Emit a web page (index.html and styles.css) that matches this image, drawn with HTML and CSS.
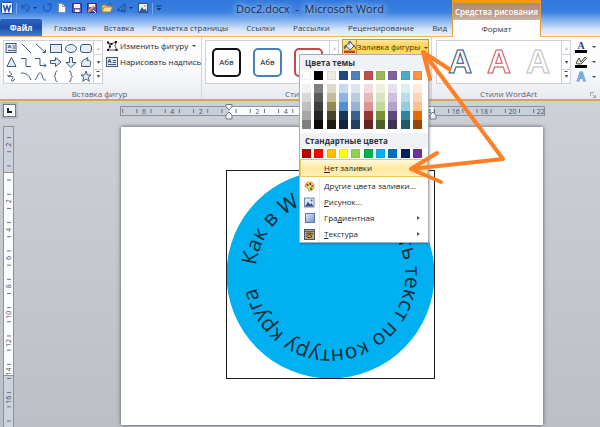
FILE: index.html
```html
<!DOCTYPE html>
<html lang="ru">
<head>
<meta charset="utf-8">
<title>Doc2.docx - Microsoft Word</title>
<link rel="stylesheet" href="styles.css">
</head>
<body>
<div class="app">
  <header class="top">
    <div class="titlebar">
      <div class="quick">
        <svg class="word-logo" viewBox="0 0 12 12" width="12" height="12"><rect x=".5" y=".5" width="11" height="11" rx="1" fill="#f4f8fe" stroke="#1d4f9e"/><path d="M2.5 3l1.600 6L6 4l1.900 5 1.600-6" fill="none" stroke="#1d55b0" stroke-width="1.500"/></svg>
        <i class="bar"></i>
        <button aria-label="Отменить"><svg viewBox="0 0 18 12" width="18" height="12"><path d="M2 2v4h4M2.500 5.500C4 2.500 9 2 9 5.500 9 8 7 9 6 9.500" fill="none" stroke="#2a5fb8" stroke-width="1.600"/><path d="M13 5h4l-2 2z" fill="#17386e"/></svg></button>
        <button aria-label="Повторить"><svg viewBox="0 0 12 12" width="12" height="12"><path d="M8.500 3A3.500 3.500 0 1 1 3.500 3M6 2h4v4" fill="none" stroke="#1f5cc4" stroke-width="1.400"/></svg></button>
        <button aria-label="Создать"><svg viewBox="0 0 12 12" width="12" height="12"><path d="M2.500 1.500h4l3 3v6h-7z" fill="#fff" stroke="#7c93b8"/><path d="M6.500 1.500v3h3" fill="none" stroke="#7c93b8"/></svg></button>
        <button aria-label="Сохранить"><svg viewBox="0 0 12 12" width="12" height="12"><path d="M1.500 1.500h9v9h-9z" fill="#6558b8" stroke="#362c88"/><path d="M3 2h6v4H3z" fill="#f3f3fb"/><path d="M4 7.500h4.500V10H4z" fill="#fff"/></svg></button>
        <button aria-label="Сохранить как"><svg viewBox="0 0 12 12" width="12" height="12"><path d="M1.500 1.500h9v9h-9z" fill="#6558b8" stroke="#362c88"/><path d="M3 2h6v3H3z" fill="#fff"/><path d="M2 10l6-6" stroke="#ef9a36" stroke-width="2"/><path d="M7 8l3 3" stroke="#fff"/></svg></button>
        <button aria-label="Открыть"><svg viewBox="0 0 12 12" width="12" height="12"><path d="M1 10V3h4l1 1h4v2" fill="#f5cf62" stroke="#a3731d" stroke-width=".8"/><path d="M1 10l2-5h8.500L9.500 10z" fill="#ffe08a" stroke="#a3731d" stroke-width=".8"/><path d="M7 2c2-1 3 0 3.500 1.500" fill="none" stroke="#2656a8"/></svg></button>
        <button aria-label="Фигура"><svg viewBox="0 0 18 12" width="18" height="12"><path d="M1 8l8-6v8z" fill="#3c78d4" stroke="#173f88" stroke-width=".8"/><path d="M5 7l2 3.500V7z" fill="#1d4f9e"/><path d="M13 5h4l-2 2z" fill="#17386e"/></svg></button>
        <button aria-label="Рисунок"><svg viewBox="0 0 12 12" width="12" height="12"><rect x="1.500" y="1.500" width="9" height="9" fill="#e8eefa" stroke="#324f86"/><path d="M2 10l3-5 2 3 1.500-1.500L10 10z" fill="#3e568f"/><circle cx="8" cy="4" r="1" fill="#e8a23a"/></svg></button>
        <i class="bar"></i>
        <button aria-label="Настройка панели"><svg viewBox="0 0 6 12" width="6" height="12"><path d="M.5 4h5" stroke="#15356a"/><path d="M.5 6h5L3 8.500z" fill="#15356a"/></svg></button>
      </div>
      <h1 class="doc-title">Doc2.docx&nbsp; -&nbsp; Microsoft Word</h1>
    </div>
    <nav class="tabs">
      <button class="tab file">Файл</button>
      <button class="tab">Главная</button>
      <button class="tab">Вставка</button>
      <button class="tab">Разметка страницы</button>
      <button class="tab">Ссылки</button>
      <button class="tab">Рассылки</button>
      <button class="tab">Рецензирование</button>
      <button class="tab">Вид</button>
    </nav>
    <div class="context">
      <div class="context-name">Средства рисования</div>
      <button class="context-tab">Формат</button>
    </div>
  </header>

  <section class="ribbon">
    <div class="group insert">
      <div class="group-body">
        <div class="gallery">
          <div class="shapes">
            <svg viewBox="0 0 14 14"><rect x="2" y="2.500" width="10" height="9" fill="#dfe9f6" stroke="#40587c"/><path d="M4 7l1.500-3L7 7M4.500 6h2M8.500 5H11M8.500 7H11M4 9.500h7" stroke="#2d4468" fill="none" stroke-width=".8"/></svg>
            <svg viewBox="0 0 14 14"><path d="M3 3l9 9"/></svg>
            <svg viewBox="0 0 14 14"><path d="M2 3l9 8M11.500 8.500v3h-3"/></svg>
            <svg viewBox="0 0 14 14"><rect class="f" x="1.500" y="3.500" width="11" height="8"/></svg>
            <svg viewBox="0 0 14 14"><ellipse class="f" cx="7" cy="7.500" rx="5.500" ry="4"/></svg>
            <svg viewBox="0 0 14 14"><rect class="f" x="1.500" y="3.500" width="11" height="8" rx="2.500"/></svg>
            <svg viewBox="0 0 14 14"><path class="f" d="M7.500 2.500l4.500 9H3z"/></svg>
            <svg viewBox="0 0 14 14"><path d="M2 3.500h5v8h5"/></svg>
            <svg viewBox="0 0 14 14"><path d="M1 3.500h5v7h6M10 8.500l2 2-2 2"/></svg>
            <svg viewBox="0 0 14 14"><path class="f" d="M1.500 5.500h5v-3l5.500 4.500-5.500 4.500v-3h-5z"/></svg>
            <svg viewBox="0 0 14 14"><path class="f" d="M5.500 2.500h3v5H12l-5 5-5-5h3.500z"/></svg>
            <svg viewBox="0 0 14 14"><path class="f" d="M4 5.500l5-3-1 3c4-1 4 1 3 6H2.500c0-3 0-4 1.500-6z"/></svg>
            <svg viewBox="0 0 14 14"><path d="M6 2c-3 2 4 2 1 4s-4-1-3 1 5-1 5 1-3 3-1 4 2-3 3-2"/></svg>
            <svg viewBox="0 0 14 14"><path d="M2 4c5 0 8 2 10 7"/></svg>
            <svg viewBox="0 0 14 14"><path d="M1 11C4 8 4 3 6.500 4S8 12 12 11"/></svg>
            <svg viewBox="0 0 14 14"><path d="M8.500 2C5 2 8 6 5 7.500c3 1 0 5 3.500 5"/></svg>
            <svg viewBox="0 0 14 14"><path d="M5 2c3.500 0 .5 4 3.500 5.500-3 1 0 5-3.500 5"/></svg>
            <svg viewBox="0 0 14 14"><path class="f" d="M7 2l1.500 4H12L9.300 8.300l1 4L7 10l-3.300 2.300 1-4L2 6h3.500z"/></svg>
          </div>
          <div class="scroller"><button class="off" aria-label="Вверх">▴</button><button aria-label="Вниз">▾</button><button class="more" aria-label="Ещё">▾</button></div>
        </div>
        <div class="commands">
          <button class="cmd"><svg viewBox="0 0 12 12" width="12" height="12"><path d="M2 2.500l3 1.500 5-2-1 4 2 4H2.500L4 6z" fill="#fff" stroke="#222" stroke-width=".8"/><path d="M1 1.500h2v2H1zM9 1h2v2H9zM1 9h2v2H1zM9.500 9h2v2h-2zM4.500 3h2v2h-2zM3 5.500h2v2H3z" fill="#111"/></svg>Изменить фигуру <span class="caret"></span></button>
          <button class="cmd"><svg viewBox="0 0 12 12" width="12" height="12"><rect x=".5" y="1.500" width="11" height="9" fill="#dfe9f6" stroke="#40587c"/><path d="M2 7l1.500-4L5 7M2.500 5.500h2M7 4.500h3M7 6.500h3M2 8.500h8" stroke="#2d4468" fill="none" stroke-width=".9"/></svg>Нарисовать надпись</button>
        </div>
      </div>
      <div class="group-name">Вставка фигур</div>
    </div>

    <div class="group styles">
      <div class="group-body">
        <div class="gallery">
          <div class="presets">
            <button class="preset black">Абв</button>
            <button class="preset blue">Абв</button>
            <button class="preset red">Абв</button>
          </div>
          <div class="scroller"><button class="off" aria-label="Вверх">▴</button><button aria-label="Вниз">▾</button><button class="more" aria-label="Ещё">▾</button></div>
        </div>
        <div class="fill-wrap">
          <button class="fill-btn"><span class="fill-icon"><svg viewBox="0 0 13 13" width="13" height="13"><path d="M3 5.500l4-3.500 4 4-4 4z" fill="#eef2f9" stroke="#465a7c"/><path d="M6 5V1.500c1.500-1 2 0 2 1.500" fill="none" stroke="#465a7c" stroke-width=".9"/><path d="M3 5c-2 1-2 2.500-1.500 4C2.500 8 3 7 3.500 6zM11 5c1.500 1 1.500 2.500 1.500 4" fill="#2f66b8" stroke="#2f66b8" stroke-width=".8"/><path d="M1 10.500h11v2.500H1z" fill="#c5402c"/></svg></span><span class="fill-text">Заливка фигуры <i class="caret"></i></span></button>
          <div class="menu">
            <div class="menu-head">Цвета темы</div>
            <div class="swatches" data-set="theme"></div>
            <div class="shades"></div>
            <div class="menu-head second">Стандартные цвета</div>
            <div class="swatches" data-set="standard"></div>
            <button class="item hot"><span class="ico"></span><span><u>Н</u>ет заливки</span></button>
            <button class="item"><span class="ico"><svg viewBox="0 0 11 11" width="11" height="11"><path d="M5.500 1C9 1 10.500 3.500 10 6c-.5 3-3 4.500-5 4-1.500-.5 0-2-1-3S1 7 1 5s2-4 4.500-4z" fill="#f7dd6c" stroke="#b98a22" stroke-width=".8"/><circle cx="3.500" cy="4" r="1.200" fill="#d22"/><circle cx="6.300" cy="3" r="1" fill="#222"/><circle cx="8.200" cy="5" r="1" fill="#d22"/><circle cx="7" cy="7.800" r="1.200" fill="#1b8a3a"/></svg></span><span>Др<u>у</u>гие цвета заливки...</span></button>
            <button class="item"><span class="ico"><svg viewBox="0 0 11 11" width="11" height="11"><rect x=".5" y="1" width="9.500" height="9" fill="#dfe8f7" stroke="#7087b2"/><path d="M1 9.500l3-5 2 3 1.500-1.500 2 3.500z" fill="#38508c"/><circle cx="7.500" cy="3.500" r="1" fill="#3a61b0"/></svg></span><span><u>Р</u>исунок...</span></button>
            <button class="item"><span class="ico"><i class="grad"></i></span><span>Гра<u>д</u>иентная</span><b class="sub"></b></button>
            <button class="item"><span class="ico"><svg viewBox="0 0 11 11" width="11" height="11"><rect x=".5" y=".5" width="10" height="10" fill="#c9a468" stroke="#4a5570"/><path d="M1 2.500h9" stroke="#55627c"/><path d="M2 5c2-1.500 5-1 7 0M2.500 8c1-3 4.500-3 5-1s-2 1.500-4 1.500" fill="none" stroke="#3c2a14"/></svg></span><span><u>Т</u>екстура</span><b class="sub"></b></button>
          </div>
        </div>
      </div>
      <div class="group-name">Стили фигур</div>
    </div>

    <div class="group wordart">
      <div class="group-body">
        <div class="gallery">
          <div class="letters"><span class="wa navy">A</span><span class="wa rose">A</span><span class="wa gray">A</span></div>
          <div class="scroller"><button class="off" aria-label="Вверх">▴</button><button aria-label="Вниз">▾</button><button class="more" aria-label="Ещё">▾</button></div>
        </div>
        <div class="tools">
          <button class="tool"><span class="t-a">A</span><i class="caret"></i></button>
          <button class="tool"><svg viewBox="0 0 12 13" width="12" height="13"><path d="M1 8l3-5 2 4 4-5 1.500 1.500L6 9H3z" fill="#eadfca" stroke="#333" stroke-width=".9"/><path d="M0 10h12v3H0z" fill="#000"/></svg><i class="caret"></i></button>
          <button class="tool"><span class="t-glow">A</span><i class="caret"></i></button>
        </div>
      </div>
      <div class="group-name">Стили WordArt<svg class="launcher" viewBox="0 0 6 6" width="6" height="6"><path d="M.5 4V.5H4M2.500 2.500l3 3M5.500 3v2.500H3" fill="none" stroke="#8a93a0" stroke-width=".8"/></svg></div>
    </div>
  </section>

  <main class="work">
    <div class="ruler-row">
      <button class="tab-stop" aria-label="Табуляция"><svg viewBox="0 0 5 5" width="5" height="5"><path d="M1 0v4h4" fill="none" stroke="#222" stroke-width="2"/></svg></button>
      <svg class="hruler" height="16"></svg>
    </div>
    <div class="desk">
      <svg class="vruler" width="12"></svg>
      <div class="page">
        <svg class="figure" viewBox="0 0 209 209" width="209" height="209">
          <defs><path id="ring" d="M29.500 104.500a75 75 0 0 1 150 0a75 75 0 0 1-150 0"/></defs>
          <circle cx="104.500" cy="104.500" r="104" fill="#00b0f0"/>
          <rect x=".5" y=".5" width="208" height="208" fill="none" stroke="#1c1c1c"/>
          <text class="ring-text"><textPath href="#ring" startOffset="9">Как в Word написать текст по контуру круга</textPath></text>
        </svg>
      </div>
    </div>
  </main>
  <svg class="pointer" viewBox="0 0 110 150" width="110" height="150"><path d="M104 119L25 13M50 29L24 12l7 27M104 119L12 129M38 113L12 129l30 13"/></svg>
</div>
<script src="script.js"></script>
</body>
</html>
```
FILE: styles.css
```css
* { box-sizing: border-box; }
body { margin: 0; font: 8px/12px "Open Sans", "Noto Sans", sans-serif; color: #20242b; }
button { font: inherit; color: inherit; background: none; border: 0; padding: 0; margin: 0; }
svg { display: block; flex: none; }
.app { position: relative; display: flex; flex-direction: column; min-height: 100vh; overflow: hidden; }

.top { position: relative; background: linear-gradient(#3077dd 0, #3a80e0 12px, #7fb0ee 20px, #d9e6f8 30px, #e9f0fa 36px); }
.titlebar { position: relative; height: 19px; }
.quick { display: flex; align-items: center; gap: 3px; height: 16px; padding-left: 1px; }
.bar { width: 1px; height: 11px; background: #7aa7ea; }
.doc-title { position: absolute; left: 20px; right: 0; top: 1px; width: max-content; margin: 0 auto; padding: 0 10px; font: 400 11px/16px "Open Sans", sans-serif; color: #1f2c40; text-shadow: 0 0 6px #c8defa, 0 0 6px #c8defa; }
.tabs { display: flex; height: 17px; }
.tab { padding: 0 9px; color: #343d4a; white-space: nowrap; }
.tab.file { width: 42px; margin-right: 3px; padding: 0; color: #fff; font-weight: 700; background: linear-gradient(#2c62c4, #1f4fa8 50%, #3b7fe0); border-radius: 2px 2px 0 0; }
.context { position: absolute; top: 0; left: 452px; width: 89px; border: 1px solid #e2a23c; border-top: 3px solid #f79a10; border-bottom: 0; }
.context-name { height: 17px; line-height: 17px; text-align: center; font-weight: 600; color: #fff; background: linear-gradient(#b08a78, #b9978a 60%, #cdb4a8); white-space: nowrap; }
.context-tab { display: block; width: 100%; height: 17px; background: #fdfdfe; color: #343d4a; }

.ribbon { display: flex; height: 65px; border-top: 1px solid #ecb85e; border-bottom: 2px solid #d2a757; background: linear-gradient(#fff, #f7f8fa 60%, #e8eaee); }
.group { display: flex; flex-direction: column; border-right: 1px solid #ecd6a8; }
.group-body { display: flex; padding: 3px 2px 0 3px; }
.group-name { position: relative; margin-top: 4px; text-align: center; color: #5a616c; }
.insert { width: 202px; }
.insert .group-name { padding-right: 2px; }
.styles { width: 230px; }
.styles .group-name { padding-right: 14px; }
.wordart { flex: 1; border-right: 0; }
.wordart .group-name { padding-right: 15px; }
.gallery { display: flex; height: 44px; border: 1px solid #cdd2da; background: #fff; }
.shapes { display: grid; grid-template-columns: repeat(6, 14px); grid-auto-rows: 14px; column-gap: 1px; }
.shapes svg { width: 14px; height: 14px; fill: none; stroke: #3f5877; }
.shapes .f { fill: #e3eefa; }
.scroller { display: flex; flex-direction: column; width: 9px; border-left: 1px solid #cdd2da; }
.scroller button { flex: 1; font-size: 6px; line-height: 6px; border-bottom: 1px solid #cdd2da; color: #444; }
.scroller button:last-child { border-bottom: 0; }
.scroller .off { color: #c2c6cc; }
.more { text-decoration: overline; }
.commands { display: flex; flex-direction: column; gap: 4px; padding-left: 3px; }
.cmd { display: flex; align-items: center; gap: 2px; height: 12px; white-space: nowrap; }
.caret { display: inline-block; width: 0; height: 0; margin-left: 2px; border: 2px solid transparent; border-top: 2px solid #444; border-bottom: 0; vertical-align: middle; }
.presets { display: flex; align-items: center; gap: 12px; width: 123px; padding-left: 6px; overflow: hidden; }
.preset { flex: none; width: 29px; height: 29px; border: 2px solid #111; border-radius: 5px; color: #111; background: #fff; }
.preset.blue { border-color: #4a7ebb; }
.preset.red { border-color: #be4b48; }
.fill-wrap { position: relative; margin: -1px 0 0 3px; }
.fill-btn { display: flex; height: 16px; width: 87px; border: 1px solid #c29337; background: linear-gradient(#ffe79a, #ffd04e 50%, #ffe071); }
.fill-icon { width: 15px; border-right: 1px solid #c29337; }
.fill-text { flex: 1; line-height: 14px; white-space: nowrap; color: #463a1c; }

.menu { position: absolute; z-index: 2; top: 15px; right: 0; width: 130px; border: 1px solid #a9afb8; background: #fff; box-shadow: 1px 1px 2px #0004; }
.menu-head { height: 15px; padding-left: 5px; line-height: 15px; font-weight: 700; color: #2b3340; background: #f0f2f5; }
.swatches, .shades { display: grid; grid-template-columns: repeat(10, 9px); justify-content: space-between; padding: 1px 6px 0 2px; }
.swatches button { height: 9px; border: 1px solid #0001; }
.shades { padding-top: 4px; grid-auto-rows: 9px; }
.second { margin-top: 4px; }
.item { position: relative; display: flex; align-items: center; width: 100%; height: 16px; text-align: left; white-space: nowrap; }
.item.hot { height: 18px; margin: 1px 0; border: 1px solid #e9c65e; background: linear-gradient(#fff8dc, #ffe9a0 50%, #fff0b8); }
.ico { width: 20px; height: 100%; display: flex; align-items: center; justify-content: center; border-right: 1px solid #e8eaee; margin-right: 4px; }
.hot .ico { border-color: transparent; margin-right: 3px; }
.grad { width: 10px; height: 10px; border: 1px solid #5d79a8; background: linear-gradient(135deg, #dce8fa, #7196d2); }
.sub { margin: 0 8px 0 auto; border: 2px solid transparent; border-left: 3px solid #555; border-right: 0; }

.wordart .gallery { margin-left: 1px; }
.letters { display: flex; justify-content: center; gap: 15px; align-items: center; width: 124px; }
.wa { font: 700 33px/40px "Liberation Sans", sans-serif; color: #fff; -webkit-text-stroke: 1px #2f4f86; }
.wa.navy { color: #f8faed; }
.wa.rose { -webkit-text-stroke-color: #cf5560; }
.wa.gray { -webkit-text-stroke-color: #bdbdbd; }
.tools { display: flex; flex-direction: column; gap: 2px; padding-left: 4px; }
.tool { display: flex; align-items: center; gap: 3px; height: 13px; }
.t-a { width: 12px; height: 12px; border-bottom: 3px solid #000; font: 700 10px/9px "Liberation Serif", serif; color: #1f3f80; }
.t-glow { width: 12px; font: 700 12px/12px "Liberation Sans", sans-serif; color: #fff; -webkit-text-stroke: 1px #5c9bd8; }
.launcher { position: absolute; right: 4px; bottom: 2px; }

.work { flex: 1; display: flex; flex-direction: column; background: linear-gradient(#cdd1d7, #bcbfc5); }
.ruler-row { display: flex; height: 25px; }
.tab-stop { display: flex; align-items: center; justify-content: center; flex: none; width: 13px; height: 13px; margin: 3px 0 0 3px; border: 1px solid #707884; background: #fff; outline: 2px solid #b7bcc4; }
.hruler { flex: 1; margin: 3px 54px 0 104px; min-width: 0; }
.vruler { margin-left: 3px; height: auto; }
.desk { flex: 1; display: flex; }
.page { flex: 1; margin: 1px 57px 2px 106px; padding: 43px 3px 0 0; background: #fff; box-shadow: 0 0 4px #4d535c; }
.figure { margin: 0 auto; }
.ring-text { font: 21px "Open Sans", sans-serif; fill: #152a35; }
.ruler-text { font-size: 7px; fill: #4a515c; text-anchor: middle; }
.pointer { position: absolute; z-index: 3; left: 399px; top: 40px; fill: none; stroke: #ff7f27; stroke-width: 4; stroke-linecap: round; stroke-linejoin: round; }
```
FILE: script.js
```js
const sets = {
  theme: ['#ffffff', '#000000', '#eeece1', '#1f497d', '#4f81bd', '#c0504d', '#9bbb59', '#8064a2', '#4bacc6', '#f79646'],
  standard: ['#c00000', '#ff0000', '#ffc000', '#ffff00', '#92d050', '#00b050', '#00b0f0', '#0070c0', '#002060', '#7030a0']
};
const shades = [
  ['#f2f2f2', '#7f7f7f', '#ddd9c3', '#c6d9f0', '#dbe5f1', '#f2dcdb', '#ebf1dd', '#e5e0ec', '#dbeef3', '#fdeada'],
  ['#d8d8d8', '#595959', '#c4bd97', '#8db3e2', '#b8cce4', '#e5b9b7', '#d7e3bc', '#ccc1d9', '#b7dde8', '#fbd5b5'],
  ['#bfbfbf', '#3f3f3f', '#938953', '#548dd4', '#95b3d7', '#d99694', '#c3d69b', '#b2a2c7', '#92cddc', '#fac08f'],
  ['#a5a5a5', '#262626', '#494429', '#17365d', '#366092', '#953734', '#76923c', '#5f497a', '#31859b', '#e36c09'],
  ['#7f7f7f', '#0c0c0c', '#1d1b10', '#0f243e', '#244061', '#632423', '#4f6128', '#3f3151', '#205867', '#974806']
];
function addSwatch(parent, color) {
  const b = document.createElement('button');
  b.style.background = color;
  b.setAttribute('aria-label', color);
  parent.append(b);
}
document.querySelectorAll('.swatches').forEach(el => sets[el.dataset.set].forEach(c => addSwatch(el, c)));
shades.forEach(row => row.forEach(c => addSwatch(document.querySelector('.shades'), c)));

// Rulers carry a number every two units and ticks half a unit off each whole one.
const step = 14.17;
let h = '<rect x=".5" y="2.5" width="424" height="9" fill="#c9cfd8" stroke="#8b929c"/><rect x="109" y="3" width="204" height="8" fill="#fbfcfd"/>';
for (let i = -8; i <= 22; i++) {
  const x = 109 + i * step;
  if (i && i % 2 === 0 && i > -8) h += `<text class="ruler-text" x="${x}" y="10">${Math.abs(i)}</text>`;
  if (i < 22) h += `<path d="M${x + step / 2} 5v4" stroke="#6c7480"/>`;
}
h += '<path d="M106 .5h6v2.500l-3 3-3-3zM109 8l3 3v4h-6v-4z" fill="#eef0f3" stroke="#727a86"/><path d="M313 8l3 3v4h-6v-4z" fill="#eef0f3" stroke="#727a86"/>';
document.querySelector('.hruler').innerHTML = h;

const vruler = document.querySelector('.vruler');
const height = vruler.parentElement.clientHeight;
let v = `<rect x=".5" y=".5" width="10" height="${height + 5}" fill="#ccd2de" stroke="#8b929c"/><rect x="1" y="47" width="9" height="202" fill="#fbfcfd"/><path d="M0 46.500h11M0 249.500h11" stroke="#8b929c"/>`;
for (let i = -3; 47 + i * step < height - 6; i++) {
  const y = 47 + i * step;
  if (i && i % 2 === 0) v += `<text class="ruler-text" transform="translate(8 ${y}) rotate(-90)">${Math.abs(i)}</text>`;
  v += `<path d="M4 ${y + step / 2}h4" stroke="#6c7480"/>`;
}
vruler.innerHTML = v;
```
